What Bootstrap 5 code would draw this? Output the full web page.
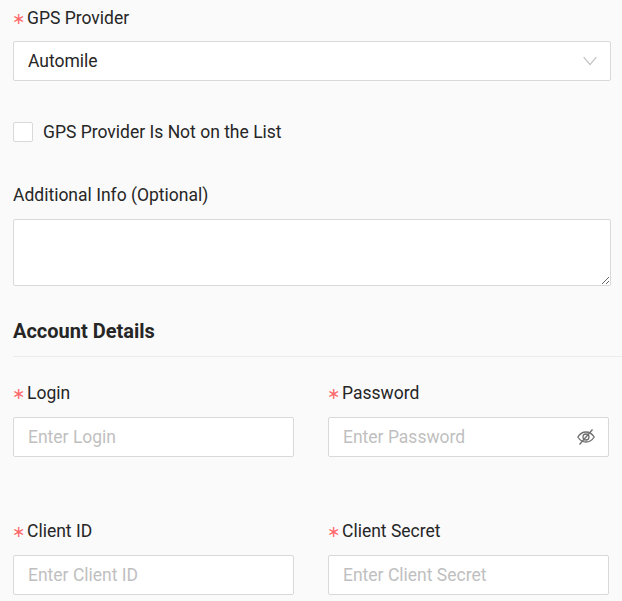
<!DOCTYPE html>
<html lang="en">
<head>
  <meta charset="UTF-8">
  <title>GPS Provider</title>
  <link href="https://cdn.jsdelivr.net/npm/bootstrap@5.3.2/dist/css/bootstrap.min.css" rel="stylesheet">
  <style>
    html, body { height: 100%; overflow: hidden; }
    body { background: #fafafa; color: #262626; font-family: Roboto, "Liberation Sans", sans-serif; font-size: 17.5px; line-height: 24px; }
    .gps-form { padding: 5px 0 0 13px; }
    .gps-label { display: block; height: 24px; margin-bottom: 12px; }
    .gps-label-gap { margin-bottom: 13px; }
    .req { padding-top: 1px; }
    .req::before { content: "\2217"; display: inline-block; width: 14px; margin-left: -1px; margin-right: 1px; color: #ff6b6d; font-family: "DejaVu Sans", sans-serif; font-size: 16px; line-height: 1; }
    .gps-box.form-control { height: 40px; padding: 0 14px; font-size: 17.5px; color: #262626; border: 1px solid #d9d9d9; border-radius: 2px; background-color: #fff; box-shadow: none; }
    .gps-box::placeholder { color: #bfbfbf; opacity: 1; }
    .gps-wide { width: 598px; }
    .gps-select-wrap { position: relative; margin-bottom: 41px; }
    .gps-arrow { position: absolute; right: 14px; top: 14px; }
    .gps-check { height: 20px; margin-bottom: 41px; gap: 10px; }
    .gps-check .form-check-input { width: 20px; height: 20px; margin: 0; border: 1px solid #d9d9d9; border-radius: 2px; flex: none; }
    .gps-area.form-control { display: block; height: 67px; width: 598px; border: 1px solid #d9d9d9; border-radius: 2px; background: #fff; margin-bottom: 33px; }
    .gps-title { font-size: 20px; font-weight: 700; line-height: 24px; margin: 0 0 23px; padding-bottom: 13px; border-bottom: 1px solid #ececec; }
    .gps-cols { gap: 34px; margin-bottom: 61px; }
    .gps-cols:last-child { margin-bottom: 0; }
    .gps-col { width: 281px; flex: none; }
    .gps-pass { position: relative; }
    .gps-eye { position: absolute; right: 14px; top: 11px; }
  </style>
</head>
<body>
  <form class="gps-form">
    <label class="gps-label req">GPS Provider</label>
    <div class="gps-select-wrap gps-wide">
      <div class="form-control gps-box d-flex align-items-center">Automile</div>
      <svg class="gps-arrow" width="14" height="12" viewBox="0 0 14 12" fill="none" stroke="#bfbfbf" stroke-width="1.2"><path d="M.7 2.2 7 9.6l6.3-7.4"/></svg>
    </div>

    <div class="d-flex align-items-center gps-check">
      <input class="form-check-input" type="checkbox" id="notListed">
      <label for="notListed">GPS Provider Is Not on the List</label>
    </div>

    <label class="gps-label">Additional Info (Optional)</label>
    <textarea class="form-control gps-area"></textarea>

    <h2 class="gps-title">Account Details</h2>

    <div class="d-flex gps-cols">
      <div class="gps-col">
        <label class="gps-label gps-label-gap req">Login</label>
        <input class="form-control gps-box" type="text" placeholder="Enter Login">
      </div>
      <div class="gps-col">
        <label class="gps-label gps-label-gap req">Password</label>
        <div class="gps-pass">
          <input class="form-control gps-box" type="text" placeholder="Enter Password">
          <svg class="gps-eye" width="18" height="18" viewBox="0 0 18 18" fill="none" stroke="#6f6f6f" stroke-width="1.3"><path d="M.8 9C3 5.6 5.800 4 9 4s6 1.600 8.200 5c-2.200 3.400-5 5-8.200 5S3 12.400.8 9z"/><circle cx="9" cy="9" r="3"/><path d="M15.500 1.500 2.500 16.500"/></svg>
        </div>
      </div>
    </div>

    <div class="d-flex gps-cols">
      <div class="gps-col">
        <label class="gps-label gps-label-gap req">Client ID</label>
        <input class="form-control gps-box" type="text" placeholder="Enter Client ID">
      </div>
      <div class="gps-col">
        <label class="gps-label gps-label-gap req">Client Secret</label>
        <input class="form-control gps-box" type="text" placeholder="Enter Client Secret">
      </div>
    </div>
  </form>
  <script src="https://cdn.jsdelivr.net/npm/bootstrap@5.3.2/dist/js/bootstrap.bundle.min.js"></script>
</body>
</html>
